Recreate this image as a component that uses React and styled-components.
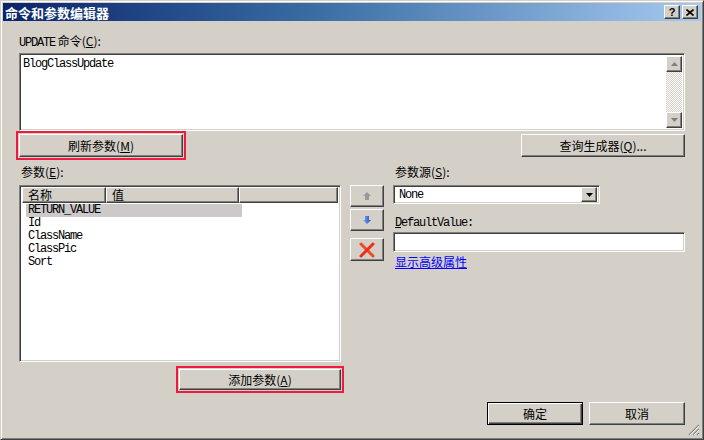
import styled, { createGlobalStyle } from "styled-components";

const GlobalStyle = createGlobalStyle`
  html, body {
    margin: 0;
    padding: 0;
  }
  body {
    width: 704px;
    height: 440px;
    overflow: hidden;
    background: #d4d0c8;
    font-family: "Noto Sans CJK SC", sans-serif;
    font-size: 12px;
    color: #000;
  }
`;

const Window = styled.div`
  position: relative;
  box-sizing: border-box;
  width: 704px;
  height: 440px;
  display: flex;
  flex-direction: column;
  background: #d4d0c8;
  border-top: 1px solid #d4d0c8;
  border-left: 1px solid #d4d0c8;
  border-right: 1px solid #404040;
  border-bottom: 1px solid #404040;
  box-shadow: inset 1px 1px 0 #fff, inset -1px -1px 0 #808080;
  padding: 2px;
`;

const TitleBar = styled.div`
  height: 18px;
  display: flex;
  align-items: center;
  justify-content: space-between;
  padding: 0 3px 0 2px;
  background: linear-gradient(to right, #0a246a, #3a6ea5 45%, #a6caf0);
`;

const TitleText = styled.span`
  color: #fff;
  font-weight: bold;
  font-size: 13px;
  line-height: 13px;
`;

const TitleButtons = styled.div`
  display: flex;
  gap: 2px;
`;

const CaptionButton = styled.div`
  box-sizing: border-box;
  width: 16px;
  height: 14px;
  display: flex;
  align-items: center;
  justify-content: center;
  background: #d4d0c8;
  border-top: 1px solid #fff;
  border-left: 1px solid #fff;
  border-right: 1px solid #404040;
  border-bottom: 1px solid #404040;
  box-shadow: inset -1px -1px 0 #808080;
  font-family: "Liberation Sans", sans-serif;
  font-weight: bold;
  font-size: 11px;
  line-height: 11px;
`;

const Body = styled.div`
  flex: 1;
  display: flex;
  flex-direction: column;
  padding: 14px 16px 0 16px;
`;

const Label = styled.div`
  height: 12px;
  line-height: 12px;
  font-size: 12px;
  white-space: nowrap;
  padding-left: ${(p) => p.$indent || 0}px;
  margin-top: ${(p) => p.$top || 0}px;
`;

const Mono = styled.span`
  font-family: "Liberation Mono", monospace;
  font-size: 12px;
  letter-spacing: -1.2px;
`;

const Sunken = styled.div`
  box-sizing: border-box;
  background: #fff;
  border-top: 1px solid #808080;
  border-left: 1px solid #808080;
  border-right: 1px solid #fff;
  border-bottom: 1px solid #fff;
  box-shadow: inset 1px 1px 0 #404040, inset -1px -1px 0 #d4d0c8;
`;

const TextArea = styled(Sunken)`
  margin-top: 6px;
  height: 78px;
  display: flex;
  padding: 2px;
`;

const TextContent = styled.div`
  flex: 1;
  padding: 2px 1px;
  line-height: 12px;
  font-family: "Liberation Mono", monospace;
  letter-spacing: -1.2px;
`;

const ScrollBar = styled.div`
  width: 16px;
  display: flex;
  flex-direction: column;
  justify-content: space-between;
  background-color: #fff;
  background-image: repeating-conic-gradient(#d4d0c8 0 25%, #fff 0 50%);
  background-size: 2px 2px;
`;

const RaisedBox = styled.div`
  box-sizing: border-box;
  display: flex;
  align-items: center;
  justify-content: center;
  background: #d4d0c8;
  border-top: 1px solid #fff;
  border-left: 1px solid #fff;
  border-right: 1px solid #404040;
  border-bottom: 1px solid #404040;
  box-shadow: inset -1px -1px 0 #808080;
`;

const ScrollButton = styled(RaisedBox)`
  width: 16px;
  height: 16px;
`;

const ButtonRow = styled.div`
  margin-top: 3px;
  display: flex;
  justify-content: space-between;
`;

const Button = styled(RaisedBox)`
  width: ${(p) => p.$w}px;
  height: ${(p) => p.$h || 23}px;
  font-size: 12px;
  line-height: 12px;
  white-space: nowrap;
  outline: ${(p) => (p.$mark ? "2px solid #ee1a40" : "none")};
  outline-offset: 1px;
  border: ${(p) => (p.$default ? "1px solid #000" : undefined)};
  box-shadow: ${(p) =>
    p.$default
      ? "inset 1px 1px 0 #fff, inset -1px -1px 0 #404040, inset -2px -2px 0 #808080"
      : "inset -1px -1px 0 #808080"};
`;

const MainGrid = styled.div`
  margin-top: 9px;
  display: grid;
  grid-template-columns: 322px 34px 292px;
  grid-template-rows: 12px auto;
  column-gap: 9px;
  row-gap: 7px;
`;

const Column = styled.div`
  display: flex;
  flex-direction: column;
`;

const ListView = styled(Sunken)`
  height: 177px;
  padding: 1px 2px 2px 2px;
  display: flex;
  flex-direction: column;
`;

const Header = styled.div`
  display: flex;
  flex: none;
  height: 16px;
`;

const HeaderCell = styled(RaisedBox)`
  justify-content: flex-start;
  width: ${(p) => (p.$w ? `${p.$w}px` : "auto")};
  flex: ${(p) => (p.$w ? "none" : 1)};
  padding-left: 5px;
  line-height: 12px;
  font-size: 12px;
  overflow: hidden;
`;

const Rows = styled.div`
  padding: 1px 0 0 4px;
`;

const Row = styled.div`
  width: 214px;
  height: 13px;
  line-height: 13px;
  padding-left: 2px;
  font-family: "Liberation Mono", monospace;
  font-size: 12px;
  letter-spacing: -1.2px;
  background: ${(p) => (p.$selected ? "#cdc9c9" : "transparent")};
`;

const SideButtons = styled.div`
  display: flex;
  flex-direction: column;
`;

const SideButton = styled(RaisedBox)`
  width: 34px;
  height: ${(p) => p.$h}px;
  margin-bottom: ${(p) => p.$gap || 0}px;
`;

const Combo = styled(Sunken)`
  width: 207px;
  height: 19px;
  display: flex;
  align-items: center;
  padding: 2px;
`;

const ComboText = styled.div`
  flex: 1;
  padding-left: 3px;
  line-height: 12px;
  font-family: "Liberation Mono", monospace;
  letter-spacing: -1.2px;
`;

const ComboButton = styled(RaisedBox)`
  width: 16px;
  height: 15px;
`;

const Input = styled(Sunken)`
  margin-top: 5px;
  height: 20px;
`;

const Link = styled.span`
  margin-top: 3px;
  padding-left: 2px;
  color: #0000ff;
  text-decoration: underline;
  font-size: 12px;
  line-height: 13px;
`;

const AddRow = styled.div`
  margin-top: 7px;
  display: flex;
  justify-content: flex-end;
`;

const Footer = styled.div`
  margin-top: 12px;
  display: flex;
  justify-content: flex-end;
  gap: 6px;
`;

const Grip = styled.svg`
  position: absolute;
  right: 3px;
  bottom: 3px;
`;

function ArrowUp({ color = "#999" }) {
  return (
    <svg width="10" height="10" viewBox="0 0 10 10">
      <polygon points="5,1 9,5 7,5 7,9 3,9 3,5 1,5" fill={color} />
    </svg>
  );
}

function ArrowDown() {
  return (
    <svg width="10" height="10" viewBox="0 0 10 10">
      <defs>
        <linearGradient id="bl" x1="0" x2="1">
          <stop offset="0" stopColor="#7aa8f4" />
          <stop offset="1" stopColor="#1f4fc8" />
        </linearGradient>
      </defs>
      <polygon points="3,1 7,1 7,5 9,5 5,9 1,5 3,5" fill="url(#bl)" />
    </svg>
  );
}

function RedCross() {
  return (
    <svg width="16" height="16" viewBox="0 0 16 16">
      <path d="M2 2 L14 14" stroke="#f04a2a" strokeWidth="3" strokeLinecap="round" />
      <path d="M14 2 L2 14" stroke="#e8301c" strokeWidth="3" strokeLinecap="round" />
    </svg>
  );
}

function Tri({ up, color = "#808080" }) {
  return (
    <svg width="7" height="4" viewBox="0 0 7 4">
      <polygon points={up ? "3.5,0 7,4 0,4" : "0,0 7,0 3.5,4"} fill={color} />
    </svg>
  );
}

const params = ["RETURN_VALUE", "Id", "ClassName", "ClassPic", "Sort"];

export default function App() {
  return (
    <>
      <GlobalStyle />
      <Window>
        <TitleBar>
          <TitleText>命令和参数编辑器</TitleText>
          <TitleButtons>
            <CaptionButton>?</CaptionButton>
            <CaptionButton>
              <svg width="8" height="7" viewBox="0 0 8 7">
                <path d="M0.5 0.5 L7.5 6.5 M7.5 0.5 L0.5 6.5" stroke="#000" strokeWidth="1.6" />
              </svg>
            </CaptionButton>
          </TitleButtons>
        </TitleBar>
        <Body>
          <Label>
            <Mono>UPDATE</Mono> 命令(<u>C</u>):
          </Label>
          <TextArea>
            <TextContent>BlogClassUpdate</TextContent>
            <ScrollBar>
              <ScrollButton>
                <Tri up />
              </ScrollButton>
              <ScrollButton>
                <Tri />
              </ScrollButton>
            </ScrollBar>
          </TextArea>
          <ButtonRow>
            <Button $w={164} $mark>
              刷新参数(<u>M</u>)
            </Button>
            <Button $w={164}>
              查询生成器(<u>Q</u>)...
            </Button>
          </ButtonRow>
          <MainGrid>
            <Label $indent={2}>
              参数(<u>E</u>):
            </Label>
            <div />
            <Label $indent={2}>
              参数源(<u>S</u>):
            </Label>
            <Column>
              <ListView>
                <Header>
                  <HeaderCell $w={84}>名称</HeaderCell>
                  <HeaderCell $w={133}>值</HeaderCell>
                  <HeaderCell />
                </Header>
                <Rows>
                  {params.map((p, i) => (
                    <Row key={p} $selected={i === 0}>
                      {p}
                    </Row>
                  ))}
                </Rows>
              </ListView>
              <AddRow>
                <Button $w={162} $h={21} $mark>
                  添加参数(<u>A</u>)
                </Button>
              </AddRow>
            </Column>
            <SideButtons>
              <SideButton $h={22} $gap={2}>
                <ArrowUp />
              </SideButton>
              <SideButton $h={22} $gap={7}>
                <ArrowDown />
              </SideButton>
              <SideButton $h={23}>
                <RedCross />
              </SideButton>
            </SideButtons>
            <Column>
              <Combo>
                <ComboText>None</ComboText>
                <ComboButton>
                  <Tri color="#000" />
                </ComboButton>
              </Combo>
              <Label $indent={2} $top={11}>
                <Mono>
                  <u>D</u>efaultValue:
                </Mono>
              </Label>
              <Input />
              <Link>显示高级属性</Link>
            </Column>
          </MainGrid>
          <Footer>
            <Button $w={96} $default>
              确定
            </Button>
            <Button $w={96}>取消</Button>
          </Footer>
        </Body>
        <Grip width="12" height="12" viewBox="0 0 12 12">
          <path d="M11 1 L1 11 M11 5 L5 11 M11 9 L9 11" stroke="#808080" strokeWidth="1.2" />
          <path d="M11 2 L2 11 M11 6 L6 11 M11 10 L10 11" stroke="#fff" strokeWidth="0.8" />
        </Grip>
      </Window>
    </>
  );
}
